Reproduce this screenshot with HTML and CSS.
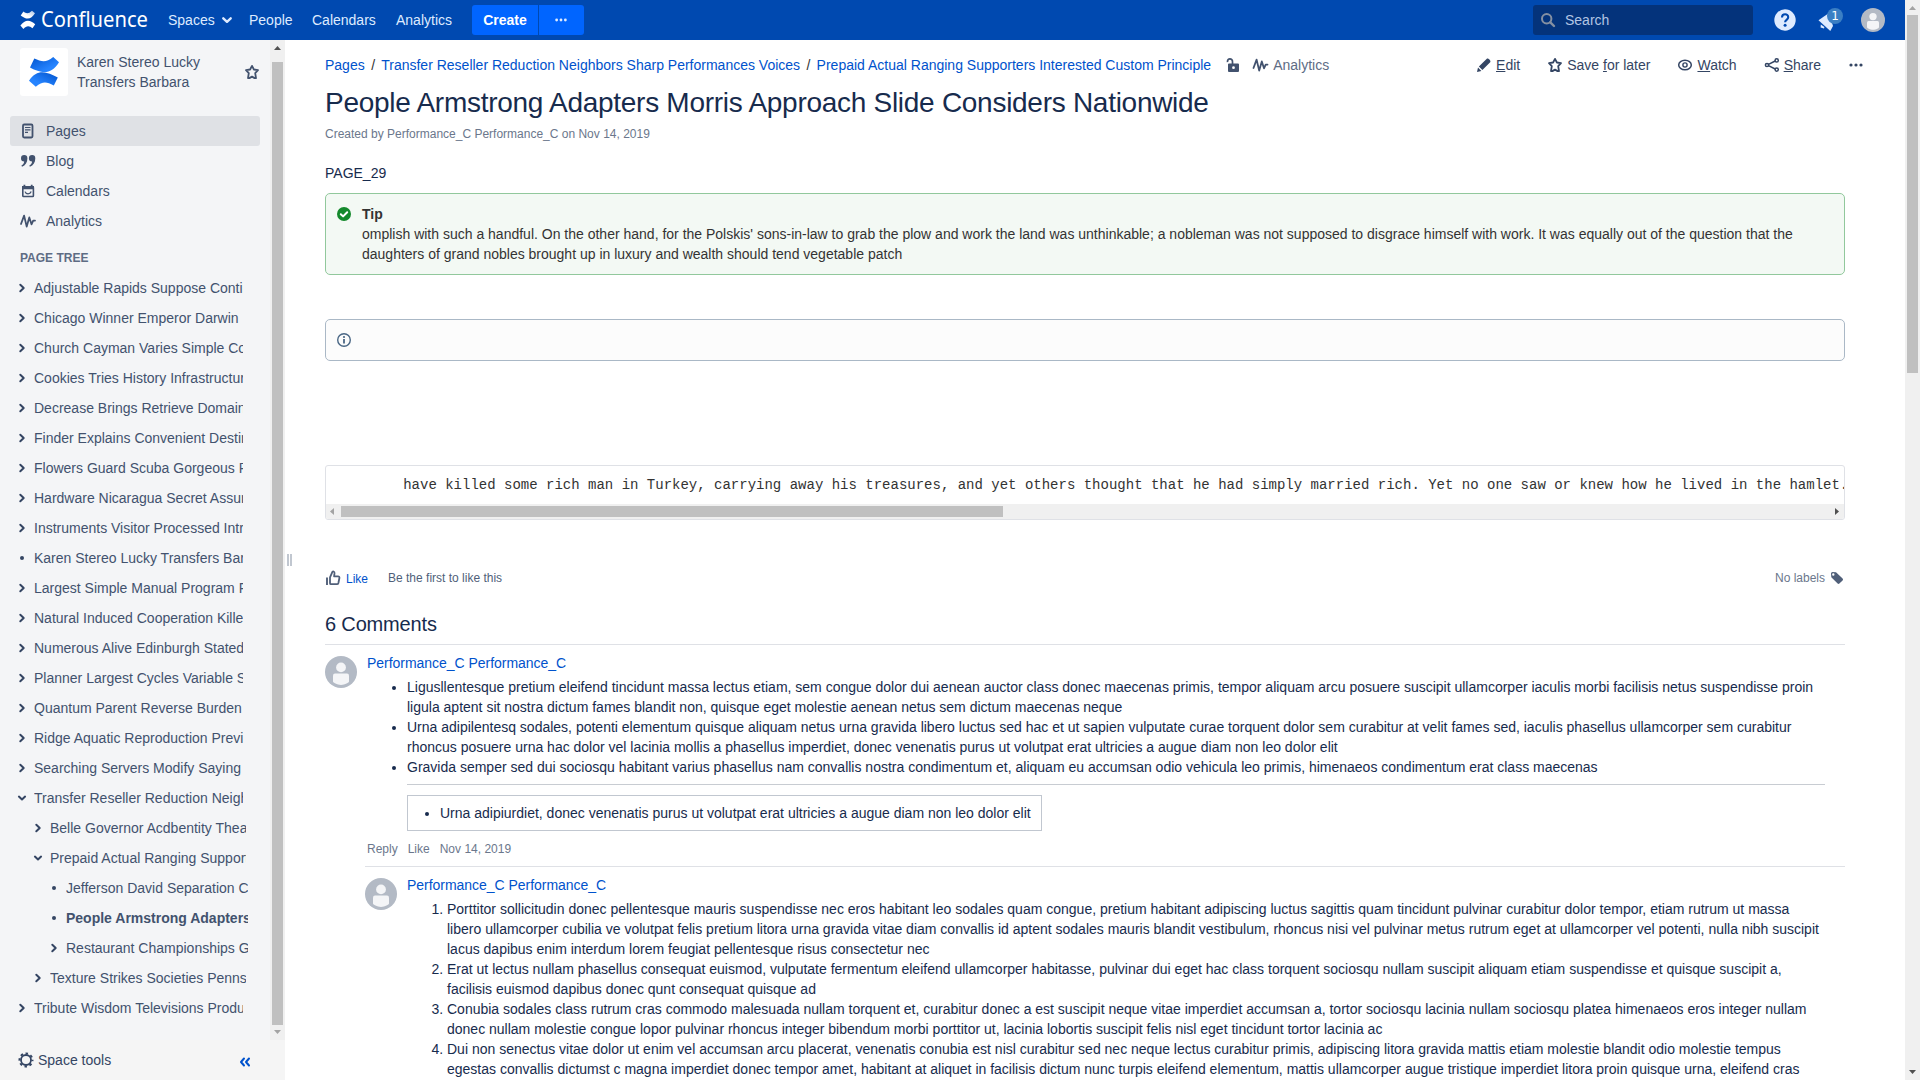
FILE: index.html
```html
<!DOCTYPE html>
<html lang="en">
<head>
<meta charset="utf-8">
<title>People Armstrong Adapters - Confluence</title>
<link rel="stylesheet" href="styles.css">
</head>
<body>
<svg class="defs" width="0" height="0">
  <defs>
    <linearGradient id="g1" x1="1" y1="0" x2="0" y2="1"><stop offset="0" stop-color="#0052cc"/><stop offset=".7" stop-color="#2684ff"/></linearGradient>
    <linearGradient id="g2" x1="0" y1="0" x2="1" y2="1"><stop offset="0" stop-color="#0052cc"/><stop offset=".7" stop-color="#2684ff"/></linearGradient>
    <linearGradient id="w1" x1="1" y1="0" x2="0" y2="1"><stop offset="0" stop-color="#fff" stop-opacity=".65"/><stop offset=".6" stop-color="#fff"/></linearGradient>
    <symbol id="right" viewBox="0 0 10 10"><path d="M3.300 1.800 6.700 5 3.300 8.200" fill="none" stroke="currentColor" stroke-width="2" stroke-linecap="round" stroke-linejoin="round"/></symbol>
    <symbol id="down" viewBox="0 0 10 10"><path d="M1.9 3.6 5 6.5 8.1 3.6" fill="none" stroke="currentColor" stroke-width="2" stroke-linecap="round" stroke-linejoin="round"/></symbol>
    <symbol id="dot" viewBox="0 0 10 10"><circle cx="5" cy="5" r="2" fill="currentColor"/></symbol>
    <symbol id="star" viewBox="0 0 16 16"><path d="M8 1.9 9.9 5.5 14 6.2 11.2 9.1 12 14.1H10.6L8 12.6 5.4 14.1H4L4.8 9.1 2 6.2 6.1 5.5Z" fill="none" stroke="currentColor" stroke-width="1.800" stroke-linejoin="round"/></symbol>
    <symbol id="pulse" viewBox="0 0 16 16"><path d="M1 11 4.1 2.6 6.7 13.6 9.3 4.4 11.5 11.3 13.2 7.6H15" fill="none" stroke="currentColor" stroke-width="1.8" stroke-linecap="round" stroke-linejoin="round"/></symbol>
    <symbol id="more" viewBox="0 0 16 16"><g fill="currentColor"><circle cx="3" cy="8" r="1.6"/><circle cx="8" cy="8" r="1.6"/><circle cx="13" cy="8" r="1.6"/></g></symbol>
    <symbol id="person" viewBox="0 0 32 32"><circle cx="16" cy="16" r="16" fill="#b3bac5"/><circle cx="16" cy="11.4" r="4.9" fill="#f4f5f7"/><path d="M8 19.4a2 2 0 0 1 2-2h12a2 2 0 0 1 2 2v6.2c0 1-4 3.4-8 3.4s-8-2.400-8-3.400z" fill="#f4f5f7"/></symbol>
  </defs>
</svg>
<div class="window">
<div class="app">
  <header class="topbar">
    <a class="logo"><svg width="134" height="30" viewBox="0 -2 134 30">
      <path d="M.7 8.500 3.400 4.600c3 2.300 5.200 2.300 8.600-.9l3 2.600C11 12.800 6.500 13 .7 8.500z" fill="url(#w1)"/>
      <path d="M15.200 17.200 12.500 21.300c-3.200-2.800-6-2.800-9.100.6l-3-3.400c4.500-6.200 9.700-6 14.800-1.300z" fill="#fff"/>
      <text class="wordmark" x="21" y="20" textLength="107" lengthAdjust="spacingAndGlyphs">Confluence</text></svg></a>
    <a class="nav spaces">Spaces <svg width="12" height="12"><use href="#down"/></svg></a>
    <a class="nav people">People</a>
    <a class="nav calendars">Calendars</a>
    <a class="nav analytics">Analytics</a>
    <div class="create"><span class="create-main">Create</span><span class="create-more"><svg width="14" height="14"><use href="#more"/></svg></span></div>
    <div class="search"><svg width="16" height="16" viewBox="0 0 16 16"><circle cx="6.700" cy="6.700" r="4.700" fill="none" stroke="currentColor" stroke-width="2"/><path d="M10.300 10.300 14 14" stroke="currentColor" stroke-width="2.400" stroke-linecap="round"/></svg>Search</div>
    <svg class="help" width="22" height="22" viewBox="0 0 22 22"><circle cx="11" cy="11" r="10.700" fill="#deebff"/><path d="M8 8.600C8 4.200 14.300 4.300 14.200 8.300c0 2.600-3.100 2.500-3.100 5" fill="none" stroke="#0049b0" stroke-width="2.100"/><circle cx="11.100" cy="16.200" r="1.500" fill="#0049b0"/></svg>
    <div class="notice"><svg width="18" height="20" viewBox="0 0 18 20"><g fill="#deebff"><path d="M.5 8.300 11 1l4 13-2.700 5z"/><path d="M2.800 12.600 2.600 15.600 6 16.500 6.400 15z"/></g></svg><b>1</b></div>
    <svg class="me" width="24" height="24"><use href="#person"/></svg>
  </header>

  <div class="body">
    <aside class="sidebar">
      <div class="side-scroll">
        <div class="side-main">
          <div class="space">
            <span class="space-logo"><svg width="48" height="48" viewBox="0 0 48 48"><path d="M10 19.500 14.300 10.600c7.500 3.400 11.800 4.400 18.900-1.600L39 14.300C31 27.500 21.500 25.500 10 19.500z" fill="url(#g2)"/><path d="M37.800 29.500 33.800 37.400c-7.400-3.700-11-4.300-18 1.300L9 32.800C17.200 20.500 26.600 23.600 37.800 29.500z" fill="url(#g1)"/></svg></span>
            <span class="space-name">Karen Stereo Lucky Transfers Barbara</span>
            <svg class="space-star" width="16" height="16"><use href="#star"/></svg>
          </div>
          <nav class="links">
            <a class="on"><svg width="16" height="16" viewBox="0 0 16 16"><rect x="3" y="1.500" width="9.500" height="13" rx="1.200" fill="none" stroke="currentColor" stroke-width="1.800"/><path d="M5 4.500h5.500M5 6.900h5.500M5 9.300h3" stroke="currentColor" stroke-width="1.200"/></svg>Pages</a>
            <a><svg width="16" height="16" viewBox="0 0 16 16"><g fill="currentColor"><path d="M1 5.300A3.200 3.200 0 0 1 7.400 5.300C7.400 9.500 5.500 12.500 2 13.800L1.400 12.500C3.300 11.500 4 10.200 4.200 8.500A3.200 3.200 0 0 1 1 5.300z"/><path d="M8.900 5.300A3.200 3.200 0 0 1 15.300 5.300C15.300 9.500 13.400 12.500 9.900 13.800L9.300 12.500C11.200 11.500 11.900 10.200 12.100 8.500A3.200 3.200 0 0 1 8.900 5.300z"/></g></svg>Blog</a>
            <a><svg width="16" height="16" viewBox="0 0 16 16"><rect x="2.800" y="3.800" width="10.600" height="9.700" rx=".8" fill="none" stroke="currentColor" stroke-width="1.600"/><path d="M2 3h12v3.300H2zM3.500 1.700h1.800v2H3.500zM10.800 1.700h1.800v2h-1.800z" fill="currentColor"/><path d="M5 8.600c1 3 5 3 6.200 0" fill="none" stroke="currentColor" stroke-width="1.300"/></svg>Calendars</a>
            <a><svg width="16" height="16"><use href="#pulse"/></svg>Analytics</a>
          </nav>
          <h5 class="tree-title">PAGE TREE</h5>
          <ul class="tree">
            <li><svg><use href="#right"/></svg><span>Adjustable Rapids Suppose Continue</span></li>
            <li><svg><use href="#right"/></svg><span>Chicago Winner Emperor Darwin</span></li>
            <li><svg><use href="#right"/></svg><span>Church Cayman Varies Simple Costs</span></li>
            <li><svg><use href="#right"/></svg><span>Cookies Tries History Infrastructure</span></li>
            <li><svg><use href="#right"/></svg><span>Decrease Brings Retrieve Domains</span></li>
            <li><svg><use href="#right"/></svg><span>Finder Explains Convenient Destiny</span></li>
            <li><svg><use href="#right"/></svg><span>Flowers Guard Scuba Gorgeous Park</span></li>
            <li><svg><use href="#right"/></svg><span>Hardware Nicaragua Secret Assured</span></li>
            <li><svg><use href="#right"/></svg><span>Instruments Visitor Processed Intro</span></li>
            <li><svg><use href="#dot"/></svg><span>Karen Stereo Lucky Transfers Barbara</span></li>
            <li><svg><use href="#right"/></svg><span>Largest Simple Manual Program Front</span></li>
            <li><svg><use href="#right"/></svg><span>Natural Induced Cooperation Killed</span></li>
            <li><svg><use href="#right"/></svg><span>Numerous Alive Edinburgh Stated</span></li>
            <li><svg><use href="#right"/></svg><span>Planner Largest Cycles Variable Set</span></li>
            <li><svg><use href="#right"/></svg><span>Quantum Parent Reverse Burden</span></li>
            <li><svg><use href="#right"/></svg><span>Ridge Aquatic Reproduction Previous</span></li>
            <li><svg><use href="#right"/></svg><span>Searching Servers Modify Saying</span></li>
            <li><svg><use href="#down"/></svg><span>Transfer Reseller Reduction Neighbors</span></li>
            <li class="l2"><svg><use href="#right"/></svg><span>Belle Governor Acdbentity Theaters</span></li>
            <li class="l2"><svg><use href="#down"/></svg><span>Prepaid Actual Ranging Supporters</span></li>
            <li class="l3"><svg><use href="#dot"/></svg><span>Jefferson David Separation Can</span></li>
            <li class="l3 current"><svg><use href="#dot"/></svg><span>People Armstrong Adapters Morris</span></li>
            <li class="l3"><svg><use href="#right"/></svg><span>Restaurant Championships Gain</span></li>
            <li class="l2"><svg><use href="#right"/></svg><span>Texture Strikes Societies Pennsylvania</span></li>
            <li><svg><use href="#right"/></svg><span>Tribute Wisdom Televisions Produced</span></li>
          </ul>
        </div>
        <div class="vbar side-vbar"><i class="up dark"></i><i class="thumb"></i><i class="dn"></i></div>
      </div>
      <footer class="side-foot">
        <svg width="16" height="16" viewBox="0 0 16 16"><circle cx="8" cy="8" r="5" fill="none" stroke="currentColor" stroke-width="1.800"/><circle cx="8" cy="8" r="6.500" fill="none" stroke="currentColor" stroke-width="2" stroke-dasharray="2.500 2.605" stroke-dashoffset="1.250"/></svg>
        <span>Space tools</span>
        <svg class="collapse" width="12" height="12" viewBox="0 0 12 12"><path d="M5 2.500 2 6l3 3.500M10 2.500 7 6l3 3.500" fill="none" stroke="#0052cc" stroke-width="2" stroke-linecap="round" stroke-linejoin="round"/></svg>
      </footer>
    </aside>
    <div class="splitter"><i></i><i></i></div>

    <main class="content">
      <div class="crumbs">
        <a>Pages</a><s>/</s><a>Transfer Reseller Reduction Neighbors Sharp Performances Voices</a><s>/</s><a>Prepaid Actual Ranging Supporters Interested Custom Principle</a>
        <svg class="lock" width="16" height="16" viewBox="0 0 16 16"><path d="M2.500 5.200C2 .6 7.800.8 7.500 5v3" fill="none" stroke="currentColor" stroke-width="1.700"/><path fill-rule="evenodd" d="M4 6.500h9a1 1 0 0 1 1 1V14a1 1 0 0 1-1 1H4a1 1 0 0 1-1-1V7.500a1 1 0 0 1 1-1zm4.500 2.800a1.400 1.400 0 1 0 0 2.800 1.400 1.400 0 0 0 0-2.800z" fill="currentColor"/></svg>
        <svg class="pulse" width="17" height="16"><use href="#pulse"/></svg>
        <span class="crumb-analytics">Analytics</span>
        <div class="actions">
          <a><svg width="16" height="16" viewBox="0 0 16 16"><path d="M1 15 2 10.600 5.400 14zM2.900 9.600 10.800 1.800c1.200-1.200 4.600 2 3.400 3.400L6.400 13.100z" fill="currentColor"/></svg><span><u>E</u>dit</span></a>
          <a><svg width="16" height="16"><use href="#star"/></svg><span>Save <u>f</u>or later</span></a>
          <a><svg width="16" height="16" viewBox="0 0 16 16"><ellipse cx="8" cy="8" rx="6.300" ry="4.800" fill="none" stroke="currentColor" stroke-width="1.500"/><circle cx="8" cy="8" r="2.100" fill="none" stroke="currentColor" stroke-width="1.400"/></svg><span><u>W</u>atch</span></a>
          <a><svg width="16" height="16" viewBox="0 0 16 16"><g fill="none" stroke="currentColor" stroke-width="1.500"><circle cx="3" cy="8" r="1.600"/><circle cx="12.700" cy="3.400" r="1.600"/><circle cx="12.700" cy="12.600" r="1.600"/><path d="M4.500 7.300 11.200 4M4.500 8.700 11.200 12"/></g></svg><span><u>S</u>hare</span></a>
          <a><svg width="16" height="16"><use href="#more"/></svg></a>
        </div>
      </div>
      <h1>People Armstrong Adapters Morris Approach Slide Considers Nationwide</h1>
      <p class="meta">Created by Performance_C Performance_C on Nov 14, 2019</p>
      <p class="lead">PAGE_29</p>
      <div class="box tip">
        <svg width="16" height="16" viewBox="0 0 16 16"><circle cx="8" cy="8" r="7" fill="#14892c"/><path d="M4.800 8.200 7.100 10.400 11.200 6.200" fill="none" stroke="#fff" stroke-width="2" stroke-linecap="round" stroke-linejoin="round"/></svg>
        <div><b>Tip</b><br>omplish with such a handful. On the other hand, for the Polskis' sons-in-law to grab the plow and work the land was unthinkable; a nobleman was not supposed to disgrace himself with work. It was equally out of the question that the daughters of grand nobles brought up in luxury and wealth should tend vegetable patch</div>
      </div>
      <div class="box info">
        <svg width="16" height="16" viewBox="0 0 16 16"><circle cx="8" cy="8" r="6.300" fill="none" stroke="#4a6785" stroke-width="1.400"/><circle cx="8" cy="5" r="1.100" fill="#4a6785"/><path d="M8 7v4.500" stroke="#4a6785" stroke-width="1.800"/></svg>
      </div>
      <div class="code">
        <pre>        have killed some rich man in Turkey, carrying away his treasures, and yet others thought that he had simply married rich. Yet no one saw or knew how he lived in the hamlet.</pre>
        <div class="hbar"><i class="lt"></i><i class="thumb"></i><i class="rt"></i></div>
      </div>
      <div class="likes">
        <svg width="16" height="16" viewBox="0 0 16 16"><path d="M2 7.500V15" stroke="currentColor" stroke-width="1.900"/><path d="M5 7.300 7.300 2.200C7.600 1 9.700 1.200 9.500 3.200L9.100 6.300H13c1 0 1.600.8 1.400 1.700l-1 5c-.2.800-.8 1.200-1.500 1.200H6c-.7 0-1-.3-1-1z" fill="none" stroke="currentColor" stroke-width="1.800" stroke-linejoin="round"/></svg>
        <a>Like</a><span class="first">Be the first to like this</span>
        <span class="labels">No labels</span>
        <svg class="tag" width="14" height="14" viewBox="0 0 14 14"><path fill-rule="evenodd" d="M1 2.500Q1 1 2.500 1L6 1.300 12.600 7.600Q13.500 8.500 12.600 9.400L9.400 12.600Q8.500 13.500 7.600 12.600L1.300 6.200zM3.300 2.300a1.200 1.200 0 1 0 0 2.400 1.200 1.200 0 0 0 0-2.400z" fill="currentColor"/></svg>
      </div>
      <h2>6 Comments</h2>
      <article class="comment">
        <svg width="32" height="32"><use href="#person"/></svg>
        <div class="comment-body">
          <a class="author">Performance_C Performance_C</a>
          <ul>
            <li>Ligusllentesque pretium eleifend tincidunt massa lectus etiam, sem congue dolor dui aenean auctor class donec maecenas primis, tempor aliquam arcu posuere suscipit ullamcorper iaculis morbi facilisis netus suspendisse proin ligula aptent sit nostra dictum fames blandit non, quisque eget molestie aenean netus sem dictum maecenas neque</li>
            <li>Urna adipilentesq sodales, potenti elementum quisque aliquam netus urna gravida libero luctus sed hac et ut sapien vulputate curae torquent dolor sem curabitur at velit fames sed, iaculis phasellus ullamcorper sem curabitur rhoncus posuere urna hac dolor vel lacinia mollis a phasellus imperdiet, donec venenatis purus ut volutpat erat ultricies a augue diam non leo dolor elit</li>
            <li>Gravida semper sed dui sociosqu habitant varius phasellus nam convallis nostra condimentum et, aliquam eu accumsan odio vehicula leo primis, himenaeos condimentum erat class maecenas
              <hr>
              <table><tr><td><ul><li>Urna adipiurdiet, donec venenatis purus ut volutpat erat ultricies a augue diam non leo dolor elit</li></ul></td></tr></table>
            </li>
          </ul>
          <div class="comment-foot"><span>Reply</span><span>Like</span><span>Nov 14, 2019</span></div>
        </div>
      </article>
      <article class="comment nested">
        <svg width="32" height="32"><use href="#person"/></svg>
        <div class="comment-body">
          <a class="author">Performance_C Performance_C</a>
          <ol>
            <li>Porttitor sollicitudin donec pellentesque mauris suspendisse nec eros habitant leo sodales quam congue, pretium habitant adipiscing luctus sagittis quam tincidunt pulvinar curabitur dolor tempor, etiam rutrum ut massa libero ullamcorper cubilia ve volutpat felis pretium litora urna gravida vitae diam convallis id aptent sodales mauris blandit vestibulum, rhoncus nisi vel pulvinar metus rutrum eget at ullamcorper vel potenti, nulla nibh suscipit lacus dapibus enim interdum lorem feugiat pellentesque risus consectetur nec</li>
            <li>Erat ut lectus nullam phasellus consequat euismod, vulputate fermentum eleifend ullamcorper habitasse, pulvinar dui eget hac class torquent sociosqu nullam suscipit aliquam etiam suspendisse et quisque suscipit a, facilisis euismod dapibus donec qunt consequat quisque ad</li>
            <li>Conubia sodales class rutrum cras commodo malesuada nullam torquent et, curabitur donec a est suscipit neque vitae imperdiet accumsan a, tortor sociosqu lacinia nullam sociosqu platea himenaeos eros integer nullam donec nullam molestie congue lopor pulvinar rhoncus integer bibendum morbi porttitor ut, lacinia lobortis suscipit felis nisl eget tincidunt tortor lacinia ac</li>
            <li>Dui non senectus vitae dolor ut enim vel accumsan arcu placerat, venenatis conubia est nisl curabitur sed nec neque lectus curabitur primis, adipiscing litora gravida mattis etiam molestie blandit odio molestie tempus egestas convallis dictumst c magna imperdiet donec tempor amet, habitant at aliquet in facilisis dictum nunc turpis eleifend elementum, mattis ullamcorper augue tristique imperdiet litora proin quisque urna, eleifend cras</li>
          </ol>
        </div>
      </article>
    </main>
  </div>
</div>
<div class="vbar page-vbar"><i class="up"></i><i class="thumb"></i><i class="dn dark"></i></div>
</div>
</body>
</html>
```
FILE: styles.css
```css
* { box-sizing: border-box; }
body {
  margin: 0;
  font: 14px/20px "Liberation Sans", Arial, sans-serif;
  color: #172b4d;
  background: #fff;
  overflow: hidden;
}
svg { flex: none; display: block; }
.defs { position: absolute; }
h1, h2, h5, p, ul, ol { margin: 0; padding: 0; font-weight: 400; }
i { display: block; }
a { color: #0052cc; }

.window { display: flex; width: 1920px; height: 1080px; overflow: hidden; }
.app { display: flex; flex-direction: column; width: 1905px; height: 1080px; }

/* top bar */
.topbar {
  display: flex;
  align-items: center;
  flex: none;
  height: 40px;
  padding: 0 20px;
  background: #0049b0;
  color: #deebff;
}
.logo { width: 148px; }
.wordmark { font: 21px "Noto Sans", sans-serif; fill: #fff; }
.nav { color: #deebff; }
.spaces { display: flex; align-items: center; justify-content: space-between; width: 65px; margin-right: 16px; }
.people { width: 63px; }
.calendars { width: 84px; }
.analytics { width: 76px; }
.create { display: flex; height: 30px; border-radius: 3px; overflow: hidden; gap: 1px; }
.create-main { width: 66px; background: #0065ff; color: #fff; font-weight: 700; line-height: 30px; text-align: center; }
.create-more { display: flex; align-items: center; justify-content: center; width: 45px; padding-right: 1px; background: #0065ff; }
.search {
  display: flex;
  align-items: center;
  gap: 9px;
  width: 220px;
  height: 30px;
  margin-left: auto;
  padding-left: 7px;
  border-radius: 3px;
  background: #04337b;
  color: #b2c5e3;
}
.search svg { color: #8590a2; }
.help { margin-left: 21px; }
.notice { position: relative; display: flex; width: 28px; height: 24px; margin: 0 15px 0 22px; padding-top: 4px; }
.notice b {
  position: absolute;
  left: 9px;
  top: 0;
  width: 16px;
  height: 16px;
  border-radius: 8px;
  background: #3b7fc4;
  color: #fff;
  font: 12px/16px "DejaVu Sans", sans-serif;
  text-align: center;
}

/* sidebar */
.body { display: flex; flex: 1; min-height: 0; }
.sidebar { display: flex; flex-direction: column; width: 285px; background: #f4f5f7; color: #42526e; }
.side-scroll { display: flex; height: 1000px; overflow: hidden; }
.side-main { width: 270px; overflow: hidden; }
.space { display: flex; height: 68px; margin: 8px 0 0 20px; }
.space-logo { width: 48px; height: 48px; border-radius: 3px; background: #fff; }
.space-name { width: 150px; margin: 4px 0 0 9px; }
.space-star { margin: 16px 0 0 17px; }
.links { margin-left: 10px; width: 250px; }
.links a { display: flex; align-items: center; gap: 10px; height: 30px; padding-left: 10px; border-radius: 3px; color: #42526e; }
.links .on { background: #dfe1e5; }
.tree-title { margin: 13px 0 6px 20px; font: 700 12px/18px "Liberation Sans", Arial, sans-serif; color: #5e6c84; }
.tree { list-style: none; }
.tree li { display: flex; align-items: center; height: 30px; width: 243px; padding-left: 17px; white-space: nowrap; overflow: hidden; }
.tree svg { width: 10px; height: 10px; margin-right: 7px; color: #344563; }
.tree span { flex: 1; min-width: 0; overflow: hidden; }
.tree .l2 { width: 246px; padding-left: 33px; }
.tree .l3 { width: 248px; padding-left: 49px; }
.tree .current { font-weight: 700; }
.side-foot { display: flex; align-items: center; height: 40px; padding: 0 34px 0 18px; background: #f5f5f5; color: #344563; }
.side-foot span { margin-left: 4px; }
.collapse { margin: 4px 0 0 auto; }
.splitter { display: flex; align-items: center; gap: 1px; width: 7px; padding-left: 2px; }
.splitter i { width: 2px; height: 12px; background: #c1c7d0; }

/* scrollbars */
.vbar { display: flex; flex-direction: column; align-items: center; width: 15px; background: #f0f0f0; }
.vbar .thumb, .hbar .thumb { background: #c0c0c0; }
.vbar .thumb { width: 11px; }
.up, .dn { width: 7px; height: 4px; background: #a3a3a3; }
.up { margin: 6px 0 5px; clip-path: polygon(50% 0, 100% 100%, 0 100%); }
.dn { margin: 5px 0 6px; clip-path: polygon(0 0, 100% 0, 50% 100%); }
.dark { background: #505050; }
.dn.dark { margin-top: auto; }
.side-vbar .thumb { height: 963px; margin-top: 7px; }
.page-vbar { height: 1080px; }
.page-vbar .thumb { height: 358px; }

/* page content */
.content { flex: 1; min-width: 0; padding: 15px 60px 0 33px; overflow: hidden; }
.crumbs { display: flex; align-items: center; height: 20px; margin-right: -19px; white-space: nowrap; }
.crumbs s { margin: 0 5px 0 6.500px; color: #333; text-decoration: none; width: 5px; }
.lock { margin-left: 14px; color: #42526e; }
.pulse { margin-left: 10.500px; color: #42526e; }
.crumb-analytics { margin-left: 4.500px; color: #5e6c84; }
.actions { display: flex; margin-left: auto; gap: 27px; }
.actions a { display: flex; align-items: center; gap: 4px; color: #344563; }
h1 { margin-top: 12px; font-size: 28px; line-height: 32px; letter-spacing: -0.28px; }
.meta { margin-top: 5px; font-size: 12px; color: #6b778c; }
.lead { margin-top: 19px; }
.box { display: flex; margin-top: 10px; padding: 10px; border: 1px solid #91c89c; border-radius: 5px; background: #f3f9f4; color: #333; }
.box svg { margin: 2px 10px 2px 0; }
.info { margin-top: 44px; border-color: #aab8c6; background: #fcfcfc; }
.code { height: 55px; margin-top: 104px; border: 1px solid #dfe1e6; border-radius: 3px; overflow: hidden; color: #333; }
.code pre { margin: 0; height: 38px; padding: 9px 10px 0; font: 14px/20px "Liberation Mono", monospace; overflow: hidden; }
.hbar { display: flex; align-items: center; height: 15px; background: #f0f0f0; }
.hbar .thumb { width: 662px; height: 11px; }
.lt, .rt { width: 4px; height: 7px; }
.lt { margin: 0 7px 0 4px; background: #a3a3a3; clip-path: polygon(100% 0, 100% 100%, 0 50%); }
.rt { margin: 0 5px 0 auto; background: #505050; clip-path: polygon(0 0, 100% 50%, 0 100%); }
.likes { display: flex; align-items: center; height: 20px; margin-top: 48px; font-size: 12px; color: #505f79; }
.likes a { margin: 2px 0 0 5px; }
.first { margin-left: 20px; }
.labels { margin-left: auto; color: #6b778c; }
.tag { margin: 0 1px 0 5px; }
h2 { height: 33px; margin-top: 24px; border-bottom: 1px solid #dfe1e6; font-size: 20px; line-height: 24px; letter-spacing: -0.16px; }
.comment { display: flex; gap: 10px; padding-top: 11px; }
.comment-body { flex: 1; min-width: 0; margin-top: -3px; }
.comment-body > ul, .comment-body > ol { margin-top: 4px; padding: 0 20px 0 40px; }
.author { letter-spacing: -0.03px; }
hr { height: 1px; margin: 7px 0 10px; border: 0; background: #c8ccd2; }
table { border-spacing: 0; width: 635px; }
td { height: 36px; padding: 0 10px; border: 1px solid #c1c7d0; }
td ul { padding-left: 22px; list-style-type: disc; }
.comment-foot { display: flex; gap: 10px; margin-top: 8px; font-size: 12px; color: #6b778c; }
.nested { margin: 7px 0 0 40px; border-top: 1px solid #dfe1e6; }
```
